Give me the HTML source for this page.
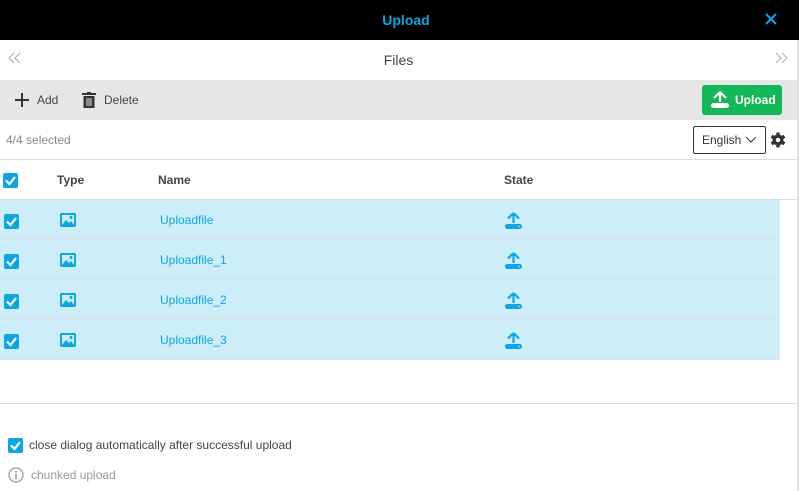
<!DOCTYPE html>
<html><head><style>
*{margin:0;padding:0;box-sizing:border-box}
body{width:799px;height:491px;overflow:hidden;background:#fff;font-family:"Liberation Sans",Arial,sans-serif;font-size:12px;color:#333;position:relative}
.a{position:absolute}
.cb{position:absolute;width:15px;height:15px;background:#0ea5e0;border-radius:2px}
.cb svg{position:absolute;left:1px;top:1px}
.row{position:absolute;left:0;width:780px;height:40px;background:#cdedf8;border-bottom:1px solid #dde}
.row .n{position:absolute;left:160px;top:13px;color:#0ea5e0;font-size:12px}
</style></head><body>
<div class="a" style="left:0;top:0;width:799px;height:40px;background:#000"></div>
<div class="a" style="left:0;top:12px;width:812px;text-align:center;color:#0ea5e0;font-weight:bold;font-size:14px">Upload</div>
<svg class="a" style="left:765px;top:13px" width="12" height="12"><path d="M1 1L11 11M11 1L1 11" stroke="#0ea5e0" stroke-width="2"/></svg>
<div class="a" style="left:797px;top:40px;width:2px;height:451px;background:#e0e0e0"></div>
<svg class="a" style="left:8px;top:52px" width="14" height="12"><path d="M6 1L1 6L6 11M12 1L7 6L12 11" stroke="#aaa" fill="none"/></svg>
<svg class="a" style="left:774px;top:52px" width="14" height="12"><path d="M2 1L7 6L2 11M8 1L13 6L8 11" stroke="#aaa" fill="none"/></svg>
<div class="a" style="left:0;top:52px;width:797px;text-align:center;font-size:14px;color:#444">Files</div>
<div class="a" style="left:0;top:80px;width:797px;height:40px;background:#e6e6e6"></div>
<svg class="a" style="left:15px;top:93px" width="14" height="14"><path d="M7 0V14M0 7H14" stroke="#333" stroke-width="2"/></svg>
<div class="a" style="left:37px;top:93px;color:#444">Add</div>
<svg class="a" style="left:82px;top:92px" width="14" height="16"><path d="M0 2H14M5 0H9" stroke="#333" stroke-width="2"/><path d="M1.5 4H12.5V16H1.5Z" fill="#333"/><path d="M5 6V14M7 6V14M9 6V14" stroke="#e6e6e6" stroke-width="1"/></svg>
<div class="a" style="left:104px;top:93px;color:#444">Delete</div>
<div class="a" style="left:702px;top:85px;width:80px;height:30px;background:#14b85a;border-radius:3px"></div>
<svg class="a" style="left:711px;top:91px" width="18" height="17"><path d="M9 1L3 7M9 1L15 7M9 1V11" stroke="#fff" stroke-width="2.2" fill="none"/><rect x="0" y="12" width="18" height="5" rx="2.5" fill="#fff"/></svg>
<div class="a" style="left:735px;top:93px;color:#fff;font-weight:bold">Upload</div>
<div class="a" style="left:6px;top:133px;color:#888">4/4 selected</div>
<div class="a" style="left:693px;top:126px;width:73px;height:28px;border:1px solid #333;border-radius:2px"></div>
<div class="a" style="left:702px;top:133px;color:#333">English</div>
<svg class="a" style="left:746px;top:137px" width="10" height="6"><path d="M0 0L5 5L10 0" stroke="#333" fill="none"/></svg>
<svg class="a" style="left:770px;top:132px" width="16" height="16" viewBox="0 0 16 16"><g fill="#333"><circle cx="8" cy="8" r="5.5"/><rect x="6.3" y="0.5" width="3.4" height="15" rx="0.5"/><rect x="6.3" y="0.5" width="3.4" height="15" rx="0.5" transform="rotate(60 8 8)"/><rect x="6.3" y="0.5" width="3.4" height="15" rx="0.5" transform="rotate(120 8 8)"/></g><circle cx="8" cy="8" r="2.2" fill="#fff"/></svg>
<div class="a" style="left:0;top:159px;width:797px;height:1px;background:#ddd"></div>
<div class="cb" style="left:3px;top:173px"><svg width="13" height="13"><path d="M2 6.5L5.5 10L11 3" stroke="#fff" stroke-width="2.2" fill="none"/></svg></div>
<div class="a" style="left:57px;top:173px;font-weight:bold;color:#444">Type</div>
<div class="a" style="left:158px;top:173px;font-weight:bold;color:#444">Name</div>
<div class="a" style="left:504px;top:173px;font-weight:bold;color:#444">State</div>
<div class="a" style="left:0;top:199px;width:797px;height:1px;background:#ddd"></div>

<div class="row" style="top:200px"><span class="n">Uploadfile</span></div>
<div class="row" style="top:240px"><span class="n">Uploadfile_1</span></div>
<div class="row" style="top:280px"><span class="n">Uploadfile_2</span></div>
<div class="row" style="top:320px"><span class="n">Uploadfile_3</span></div>

<div id="icons"></div>
<script>
var h='';[200,240,280,320].forEach(function(t){
h+='<div class="cb" style="left:4px;top:'+(t+14)+'px"><svg width="13" height="13"><path d="M2 6.5L5.5 10L11 3" stroke="#fff" stroke-width="2.2" fill="none"/></svg></div>';
h+='<svg class="a" style="left:60px;top:'+(t+13)+'px" width="16" height="14"><rect x="1" y="1" width="14" height="12" rx="1" fill="none" stroke="#0ea5e0" stroke-width="2"/><path d="M2 12L6 7L9 10L11 8L14 12Z" fill="#0ea5e0"/><circle cx="11" cy="4.5" r="1.5" fill="#0ea5e0"/></svg>';
h+='<svg class="a" style="left:505px;top:'+(t+12)+'px" width="17" height="17"><path d="M8.5 1L3 6.5M8.5 1L14 6.5M8.5 1V11" stroke="#0ea5e0" stroke-width="2.2" fill="none"/><rect x="0" y="12" width="17" height="5" rx="2.5" fill="#0ea5e0"/><circle cx="14" cy="14.5" r="0.8" fill="#cdedf8"/></svg>';
});document.getElementById('icons').innerHTML=h;
</script>
<div class="a" style="left:0;top:403px;width:797px;height:1px;background:#ddd"></div>
<div class="cb" style="left:8px;top:438px"><svg width="13" height="13"><path d="M2 6.5L5.5 10L11 3" stroke="#fff" stroke-width="2.2" fill="none"/></svg></div>
<div class="a" style="left:29px;top:438px;color:#444">close dialog automatically after successful upload</div>
<svg class="a" style="left:8px;top:467px" width="16" height="16"><circle cx="8" cy="8" r="7" fill="none" stroke="#999" stroke-width="1.3"/><circle cx="8" cy="4.8" r="1" fill="#999"/><path d="M8 7V12" stroke="#999" stroke-width="1.6"/></svg>
<div class="a" style="left:31px;top:468px;color:#999">chunked upload</div>
</body></html>
